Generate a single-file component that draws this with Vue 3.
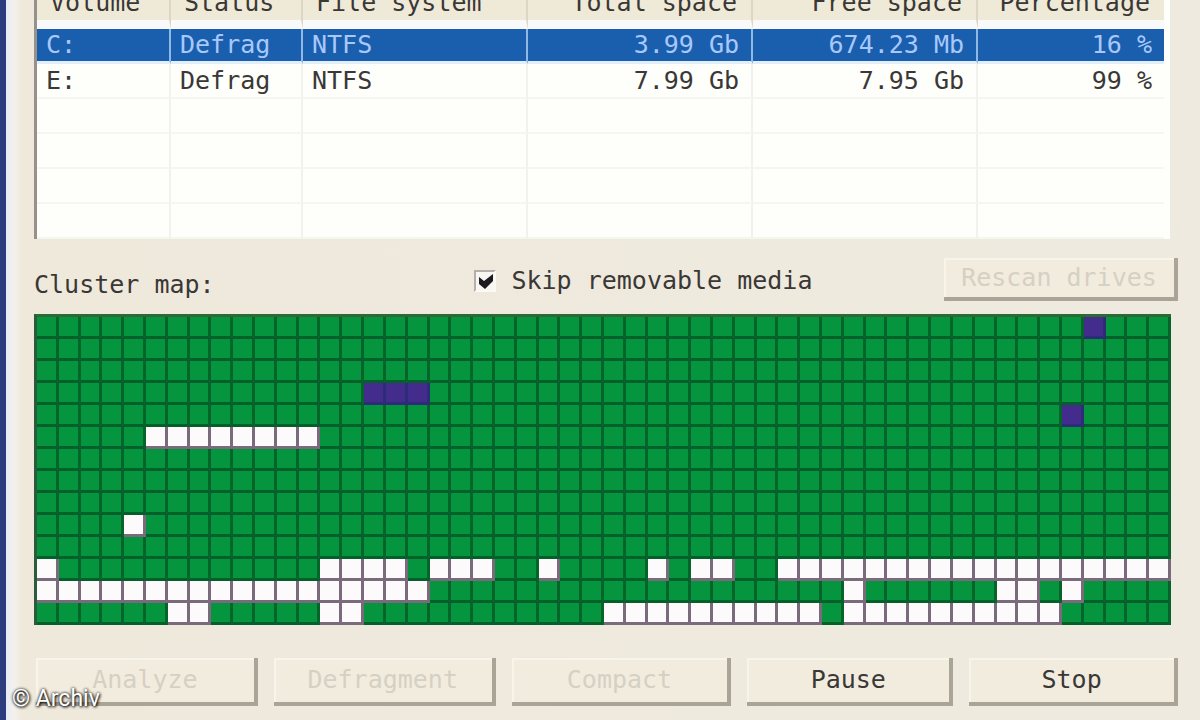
<script setup>
import { ref } from 'vue'

const skipRemovable = ref(true)

const columns = [
  { label: 'Volume', key: 'volume' },
  { label: 'Status', key: 'status' },
  { label: 'File system', key: 'fs' },
  { label: 'Total space', key: 'total', right: true },
  { label: 'Free space', key: 'free', right: true },
  { label: 'Percentage', key: 'percent', right: true },
]

const volumes = [
  { volume: 'C:', status: 'Defrag', fs: 'NTFS', total: '3.99 Gb', free: '674.23 Mb', percent: '16 %', selected: true },
  { volume: 'E:', status: 'Defrag', fs: 'NTFS', total: '7.99 Gb', free: '7.95 Gb', percent: '99 %' },
  {}, {}, {}, {},
]

const COLS = 52
const ROWS = 14

// [row, first column, last column]
const freeRuns = [
  [5, 5, 12], [9, 4, 4],
  [11, 0, 0], [11, 13, 16], [11, 18, 20], [11, 23, 23], [11, 28, 28], [11, 30, 31], [11, 34, 51],
  [12, 0, 17], [12, 37, 37], [12, 44, 45], [12, 47, 47],
  [13, 6, 7], [13, 13, 14], [13, 26, 35], [13, 37, 46],
]
const systemRuns = [[0, 48, 48], [3, 15, 17], [4, 47, 47]]

const clusters = Array(COLS * ROWS).fill('used')
function paint(runs, kind) {
  for (const [row, from, to] of runs) {
    for (let c = from; c <= to; c++) clusters[row * COLS + c] = kind
  }
}
paint(freeRuns, 'free')
paint(systemRuns, 'system')

const actions = [
  { label: 'Analyze', disabled: true },
  { label: 'Defragment', disabled: true },
  { label: 'Compact', disabled: true },
  { label: 'Pause' },
  { label: 'Stop' },
]
</script>

<template>
  <main class="window">
    <table class="volumes">
      <colgroup>
        <col class="c-first" /><col class="c-small" />
        <col class="c-wide" /><col class="c-wide" /><col class="c-wide" />
        <col />
      </colgroup>
      <thead>
        <tr>
          <th v-for="c in columns" :key="c.key" scope="col" :class="{ right: c.right }">{{ c.label }}</th>
        </tr>
      </thead>
      <tbody>
        <tr v-for="(v, i) in volumes" :key="i" :class="{ selected: v.selected }">
          <td v-for="c in columns" :key="c.key" :class="{ right: c.right }">{{ v[c.key] }}</td>
        </tr>
      </tbody>
    </table>

    <div class="options">
      <span id="map-label" class="map-label">Cluster map:</span>
      <label class="skip">
        <span class="check">
          <input v-model="skipRemovable" type="checkbox" />
          <svg v-if="skipRemovable" viewBox="0 0 22 22" aria-hidden="true">
            <path d="M5 7 L10 11 L19 4 V11 L11 19 L5 14 Z" />
          </svg>
        </span>
        Skip removable media
      </label>
      <button class="btn rescan" type="button" disabled>Rescan drives</button>
    </div>

    <div class="map" role="img" aria-labelledby="map-label">
      <i v-for="(kind, i) in clusters" :key="i" :class="kind"></i>
    </div>

    <div class="actions">
      <button v-for="a in actions" :key="a.label" class="btn" type="button" :disabled="a.disabled">{{ a.label }}</button>
    </div>

    <div class="credit">© Archiv</div>
  </main>
</template>

<style>
body {
  background: #efeadf;
  overflow: hidden;
}
</style>

<style scoped>
.window {
  box-sizing: border-box;
  height: 100vh;
  overflow: hidden;
  position: relative;
  padding: 0 22px 0 20px;
  border-left: 6px solid #2d3c7c;
  background: linear-gradient(90deg, #e9ebf5 0, #f3f1ec 8px, #efe9dc 16px, #efeadf 100%);
  font-family: "DejaVu Sans Mono", "Liberation Mono", monospace;
  font-size: 25px;
  line-height: 30px;
  color: #3a3836;
}

.volumes {
  table-layout: fixed;
  width: calc(100% - 16px);
  margin: -14px 0 0 8px;
  border-collapse: separate;
  border-spacing: 0;
  border-left: 3px solid #96918c;
  border-right: 6px solid #fefefb;
  background: #fefefb;
}
.c-first { width: 134px; }
.c-small { width: 132px; }
.c-wide { width: 225px; }

th {
  height: 43px;
  padding: 0 14px 0 13px;
  background: #efe9d8;
  border-right: 2px solid #dcd6c6;
  border-bottom: 9px solid #f8f9f8;
  box-sizing: border-box;
  font-weight: 400;
  text-align: left;
  white-space: nowrap;
}
td {
  box-sizing: border-box;
  height: 35px;
  padding: 0 12px 0 9px;
  border-right: 2px solid #f1f2ec;
  border-bottom: 2px solid #f5f6f0;
  white-space: nowrap;
}
th:last-child,
td:last-child { border-right: 0; }
.right { text-align: right; }

.selected td {
  background: #1a5fae;
  border-right-color: #8fb8e4;
  border-bottom: 3px solid #e2eefa;
  color: #a9c8fa;
}

.options {
  display: flex;
  align-items: flex-start;
  height: 75px;
  padding: 19px 0 0 8px;
  box-sizing: border-box;
}
.map-label {
  width: 38.5%;
  padding-top: 12px;
}
.skip {
  display: flex;
  align-items: center;
  gap: 15px;
  padding-top: 8px;
  white-space: nowrap;
}
.check {
  position: relative;
  width: 22px;
  height: 22px;
}
.check input {
  appearance: none;
  display: block;
  box-sizing: border-box;
  width: 22px;
  height: 22px;
  margin: 0;
  background: #f8f6f1;
  border: 2px solid #fbf9f4;
  border-top-color: #b4afab;
  border-left-color: #b4afab;
}
.check svg {
  position: absolute;
  inset: 0;
  fill: #1c1a20;
  pointer-events: none;
}

.btn {
  box-sizing: border-box;
  height: 48px;
  padding: 0;
  border: 0 solid #aaa497;
  border-right-width: 4px;
  border-bottom-width: 4px;
  box-shadow: inset 2px 2px 0 #f7f4ea;
  background: #f1ecde;
  font: inherit;
  color: #3a3836;
  text-align: center;
  white-space: nowrap;
}
.btn:disabled { color: #d6d0c3; }
.rescan {
  width: 234px;
  height: 43px;
  margin-left: auto;
}

.map {
  display: grid;
  grid-template-columns: repeat(52, 1fr);
  grid-auto-rows: 22px;
  margin: 0 7px 0 8px;
  border-top: 3px solid #2b6a35;
  border-left: 3px solid #2b5a3c;
}
.map i {
  border-right: 3px solid #04642a;
  border-bottom: 3px solid #04602a;
}
.used { background: #05953f; }
.free {
  background: #fdfafc;
  border-color: #7b6a7c !important;
}
.system {
  background: #442c8c;
  border-color: #2c2c78 !important;
}

.actions {
  display: grid;
  grid-template-columns: 222fr 222fr 220fr 206fr 209fr;
  gap: 16px;
  margin: 33px 0 0 10px;
}

.credit {
  position: absolute;
  left: 6px;
  bottom: 6px;
  font-family: Roboto, "Liberation Sans", sans-serif;
  font-size: 23px;
  color: #fff;
  text-shadow: 0 0 3px #000, 1px 1px 3px #000;
}
</style>
